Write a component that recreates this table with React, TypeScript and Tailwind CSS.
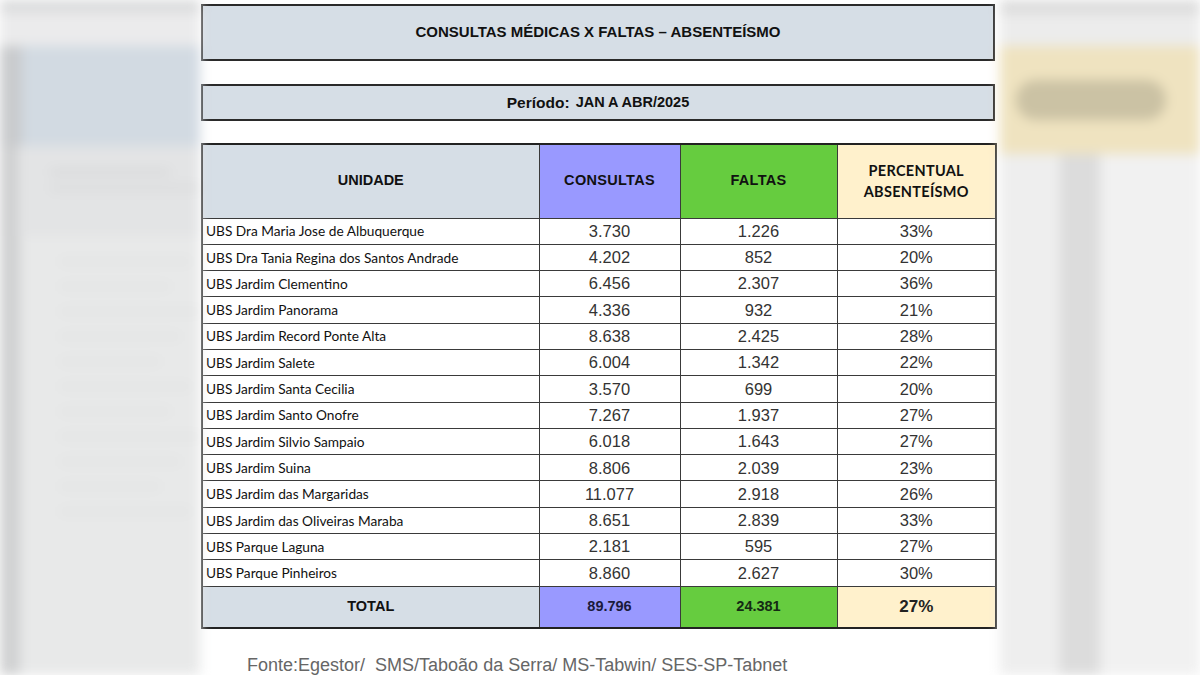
import React from 'react';

const rows: [string, string, string, string][] = [
  ['UBS Dra Maria Jose de Albuquerque', '3.730', '1.226', '33%'],
  ['UBS Dra Tania Regina dos Santos Andrade', '4.202', '852', '20%'],
  ['UBS Jardim Clementino', '6.456', '2.307', '36%'],
  ['UBS Jardim Panorama', '4.336', '932', '21%'],
  ['UBS Jardim Record Ponte Alta', '8.638', '2.425', '28%'],
  ['UBS Jardim Salete', '6.004', '1.342', '22%'],
  ['UBS Jardim Santa Cecilia', '3.570', '699', '20%'],
  ['UBS Jardim Santo Onofre', '7.267', '1.937', '27%'],
  ['UBS Jardim Silvio Sampaio', '6.018', '1.643', '27%'],
  ['UBS Jardim Suina', '8.806', '2.039', '23%'],
  ['UBS Jardim das Margaridas', '11.077', '2.918', '26%'],
  ['UBS Jardim das Oliveiras Maraba', '8.651', '2.839', '33%'],
  ['UBS Parque Laguna', '2.181', '595', '27%'],
  ['UBS Parque Pinheiros', '8.860', '2.627', '30%'],
];

const arial = "font-['Liberation_Sans',Arial,sans-serif]";
const calibri = "font-['Lato','Open_Sans',sans-serif]";

function LeftBackdrop() {
  return (
    <div className="w-[200px] h-[675px] overflow-hidden bg-[#e6e7e8] flex flex-col blur-[6px]">
      <div className="h-[12px] bg-[#d9dadb]" />
      <div className="h-[34px] bg-[#ebebec]" />
      <div className="h-[100px] flex">
        <div className="w-[22px] bg-[#c9cbcd]" />
        <div className="flex-1 bg-[#d2dae2]" />
      </div>
      <div className="h-[90px] flex">
        <div className="w-[22px] bg-[#cfd0d1]" />
        <div className="flex-1 bg-[#e3e4e5] flex flex-col gap-3 pt-6 pl-8">
          <div className="h-[4px] w-[120px] bg-[#d2d3d4]" />
          <div className="h-[4px] w-[150px] bg-[#d6d7d8]" />
        </div>
      </div>
      <div className="flex-1 flex">
        <div className="w-[22px] bg-[#d0d1d2]" />
        <div className="flex-1 bg-[#e8e9e9] flex flex-col gap-[22px] pt-6 pl-10">
          <div className="h-[3px] w-[130px] bg-[#dcdddd]" />
          <div className="h-[3px] w-[110px] bg-[#dcdddd]" />
          <div className="h-[3px] w-[140px] bg-[#dcdddd]" />
          <div className="h-[3px] w-[120px] bg-[#dcdddd]" />
          <div className="h-[3px] w-[100px] bg-[#dcdddd]" />
          <div className="h-[3px] w-[130px] bg-[#dcdddd]" />
          <div className="h-[3px] w-[110px] bg-[#dcdddd]" />
          <div className="h-[3px] w-[140px] bg-[#dcdddd]" />
          <div className="h-[3px] w-[120px] bg-[#dcdddd]" />
          <div className="h-[3px] w-[100px] bg-[#dcdddd]" />
          <div className="h-[3px] w-[130px] bg-[#dcdddd]" />
        </div>
      </div>
    </div>
  );
}

function RightBackdrop() {
  return (
    <div className="w-[200px] h-[675px] overflow-hidden bg-[#efefef] flex flex-col blur-[6px]">
      <div className="h-[14px] bg-[#dcdcdc]" />
      <div className="h-[32px] bg-[#ececec]" />
      <div className="h-[108px] bg-[#efe3c0] flex items-center pl-4 pr-2">
        <div className="h-[40px] w-[150px] rounded-full bg-[#cbc2a4]" />
      </div>
      <div className="flex-1 flex">
        <div className="w-[60px] bg-[#eeeeee]" />
        <div className="w-[40px] bg-[#dcdcdc]" />
        <div className="flex-1 bg-[#f1f1f1]" />
      </div>
    </div>
  );
}

export default function App() {
  const cell = 'border border-[#3a3a3a]';
  const num = `${cell} text-center text-[16.5px] text-[#333] leading-none ${arial}`;
  return (
    <div className="w-[1200px] h-[675px] flex overflow-hidden bg-white">
      <LeftBackdrop />
      <div className="w-[800px] h-[675px] bg-white pl-[1px] pr-[5px] pt-[4px] flex flex-col">
        <div className={`shrink-0 h-[57px] bg-[#d6dee6] border-2 border-[#2a2a2a] flex items-center justify-center text-[15px] font-bold text-[#111] ${arial}`}>
          CONSULTAS MÉDICAS X FALTAS – ABSENTEÍSMO
        </div>
        <div className={`shrink-0 mt-[23px] h-[37px] bg-[#d6dee6] border-2 border-[#2a2a2a] flex items-center justify-center font-bold text-[#111] ${arial}`}>
          <span className="text-[15.5px]">Período:</span>
          <span className="text-[14.5px] ml-[6px]">JAN A ABR/2025</span>
        </div>
        <table className="shrink-0 mt-[22px] w-[794px] border-collapse border-2 border-[#222] table-fixed">
          <colgroup>
            <col className="w-[337px]" />
            <col className="w-[141px]" />
            <col className="w-[157px]" />
            <col className="w-[159px]" />
          </colgroup>
          <thead>
            <tr className="h-[74px]">
              <th className={`${cell} bg-[#d6dee6] text-[14.5px] font-bold text-[#111] ${arial}`}>UNIDADE</th>
              <th className={`${cell} bg-[#9999ff] text-[14.5px] font-bold text-[#111] tracking-[0.3px] ${arial}`}>CONSULTAS</th>
              <th className={`${cell} bg-[#66cc3f] text-[14.5px] font-bold text-[#111] tracking-[0.3px] ${arial}`}>FALTAS</th>
              <th className={`${cell} bg-[#fff1cc] text-[14.5px] leading-[21px] font-bold text-[#111] tracking-[0.3px] ${calibri}`}>
                PERCENTUAL
                <br />
                ABSENTEÍSMO
              </th>
            </tr>
          </thead>
          <tbody>
            {rows.map(([name, c, f, p]) => (
              <tr key={name} className="h-[26.3px]">
                <td className={`${cell} pl-[3px] text-[13.7px] text-[#111] leading-none ${calibri}`}>{name}</td>
                <td className={num}>{c}</td>
                <td className={num}>{f}</td>
                <td className={num}>{p}</td>
              </tr>
            ))}
            <tr className="h-[42px]">
              <td className={`${cell} bg-[#d6dee6] text-center text-[14.5px] font-bold text-[#111] ${arial}`}>TOTAL</td>
              <td className={`${cell} bg-[#9999ff] text-center text-[14.5px] font-bold text-[#1a1a3a] ${arial}`}>89.796</td>
              <td className={`${cell} bg-[#66cc3f] text-center text-[14.5px] font-bold text-[#142a14] ${arial}`}>24.381</td>
              <td className={`${cell} bg-[#fff1cc] text-center text-[17px] font-bold text-[#222] ${arial}`}>27%</td>
            </tr>
          </tbody>
        </table>
        <div className={`shrink-0 mt-[23px] pl-[46px] text-[18px] text-[#666] ${arial}`}>
          Fonte:Egestor/&nbsp; SMS/Taboão da Serra/ MS-Tabwin/ SES-SP-Tabnet
        </div>
      </div>
      <RightBackdrop />
    </div>
  );
}
